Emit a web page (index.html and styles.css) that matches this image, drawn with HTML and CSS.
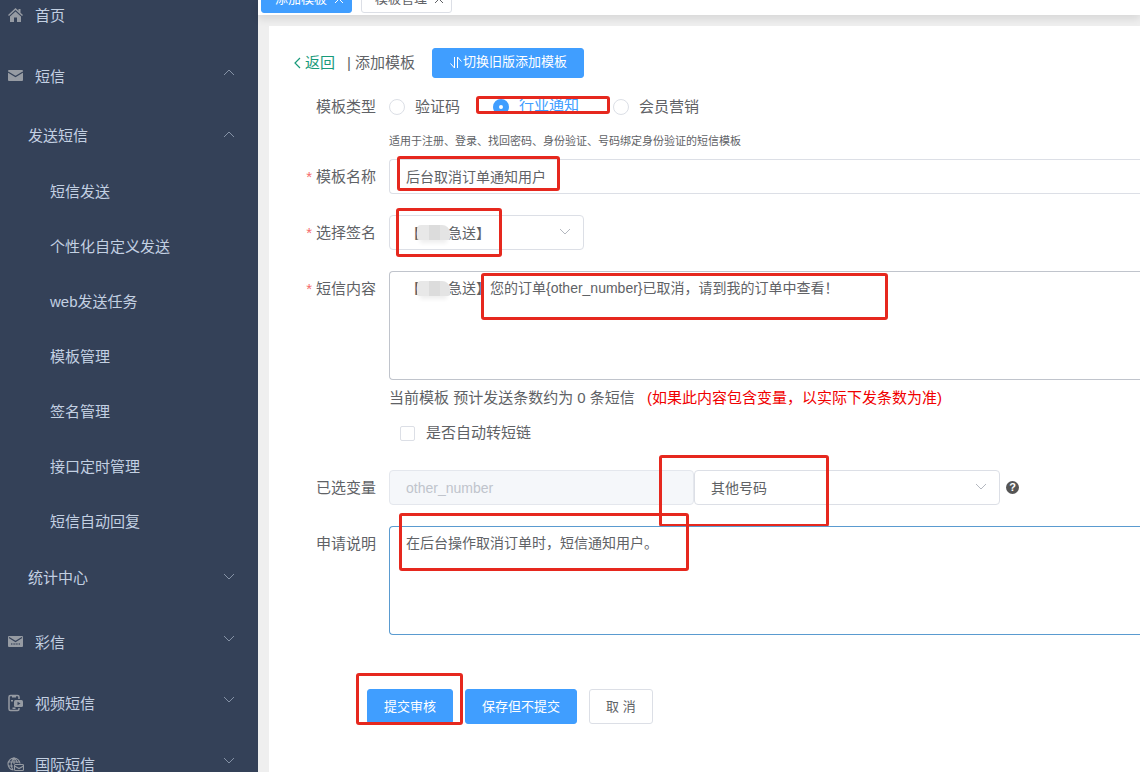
FILE: index.html
```html
<!DOCTYPE html>
<html lang="zh-CN">
<head>
<meta charset="utf-8">
<title>添加模板</title>
<link rel="stylesheet" href="styles.css">
</head>
<body>
<svg class="defs" aria-hidden="true">
  <symbol id="down" viewBox="0 0 12 8"><path d="M1 1l5 5 5-5" fill="none" stroke="currentColor"/></symbol>
  <symbol id="up" viewBox="0 0 12 8"><path d="M1 6l5-5 5 5" fill="none" stroke="currentColor"/></symbol>
  <symbol id="close" viewBox="0 0 8 8"><path d="M0 0l8 8M8 0L0 8" fill="none" stroke="currentColor"/></symbol>
</svg>
<nav class="sidebar">
  <a class="group home" href="#"><svg class="icon" viewBox="0 0 17 16"><path d="M8.500 1L1 8l1 1 6.500-6L15 9l1-1-2.500-2.300V2h-2v1.800zM8.500 4.500L3 9.500V15h4v-4.500h3V15h4V9.500z" fill="currentColor"/></svg><span>首页</span></a>
  <button class="group"><svg class="icon" viewBox="0 0 17 16"><rect x="1" y="2" width="15" height="11" rx="1" fill="currentColor"/><path d="M1 4l7.500 4.500L16 4" fill="none" stroke="#344158" stroke-width="1.200"/></svg><span>短信</span><svg class="arrow raised"><use href="#up"/></svg></button>
  <button class="sub"><span>发送短信</span><svg class="arrow"><use href="#up"/></svg></button>
  <a class="item" href="#">短信发送</a>
  <a class="item" href="#">个性化自定义发送</a>
  <a class="item" href="#">web发送任务</a>
  <a class="item" href="#">模板管理</a>
  <a class="item" href="#">签名管理</a>
  <a class="item" href="#">接口定时管理</a>
  <a class="item" href="#">短信自动回复</a>
  <button class="sub last"><span>统计中心</span><svg class="arrow"><use href="#down"/></svg></button>
  <button class="group"><svg class="icon" viewBox="0 0 17 16"><rect x="1" y="2" width="15" height="11" rx="1" fill="currentColor"/><path d="M2 3.500l6.500 4 6.500-4" fill="none" stroke="#344158" stroke-width="1.200"/><path d="M4 10h9" stroke="#344158" stroke-width="2" stroke-dasharray="1 .6" opacity=".6"/></svg><span>彩信</span><svg class="arrow raised"><use href="#down"/></svg></button>
  <button class="group"><svg class="icon tall" viewBox="0 0 17 18"><path d="M12 5V3a1.500 1.500 0 0 0-1.500-1.500h-7A1.500 1.500 0 0 0 2 3v12a1.500 1.500 0 0 0 1.500 1.500h7A1.500 1.500 0 0 0 12 15v-1" fill="none" stroke="currentColor" stroke-width="1.500"/><path d="M5 2h4v1.500H5zM4 6h2v1.500H4zM5.500 13.500h3V15h-3z" fill="currentColor"/><rect x="7" y="6" width="9" height="7" rx="1.500" fill="currentColor"/><path d="M10.500 7.700l3 1.800-3 1.800z" fill="#344158"/></svg><span>视频短信</span><svg class="arrow raised"><use href="#down"/></svg></button>
  <button class="group"><svg class="icon" viewBox="0 0 17 16"><g fill="none" stroke="currentColor" stroke-width="1.100"><path d="M6.500 14A6 6 0 1 1 13 7.500M7 2C3.500 5.500 3.500 10.500 6 14M7 2c2 1.500 3 3 3.200 5M1.500 6H12M1.500 10H6M7 2v6"/><rect x="7.500" y="8.500" width="9" height="6" rx="1"/><path d="M7.500 10l4.500 2.500 4.500-2.500"/></g></svg><span>国际短信</span><svg class="arrow raised"><use href="#down"/></svg></button>
</nav>
<main class="main">
  <header class="tabs">
    <a class="tab active" href="#">添加模板<svg class="close"><use href="#close"/></svg></a>
    <a class="tab" href="#">模板管理<svg class="close"><use href="#close"/></svg></a>
  </header>
  <section class="panel">
    <div class="heading">
      <a class="back" href="#"><svg class="backicon" viewBox="0 0 8 12"><path d="M7 1L2 6l5 5" fill="none" stroke="currentColor" stroke-width="1.200"/></svg>返回</a>
      <span class="title">| 添加模板</span>
      <button class="btn primary switch"><svg class="sort" viewBox="0 0 13 13"><path d="M5 1v11L1 7.500M8 12V1l4 4.500" fill="none" stroke="currentColor"/></svg>切换旧版添加模板</button>
    </div>
    <form class="form">
      <div class="row type" role="radiogroup" aria-labelledby="type">
        <span class="label" id="type">模板类型</span>
        <div class="field">
          <label class="option"><input class="radio" type="radio" name="type">验证码</label>
          <label class="option chosen"><input class="radio" type="radio" name="type" checked>行业通知</label>
          <label class="option"><input class="radio" type="radio" name="type">会员营销</label>
        </div>
      </div>
      <p class="hint">适用于注册、登录、找回密码、身份验证、号码绑定身份验证的短信模板</p>
      <div class="row">
        <label class="label required" for="name">模板名称</label>
        <div class="field"><input class="control open" id="name" value="后台取消订单通知用户"><i class="mark mark-name"></i></div>
      </div>
      <div class="row">
        <label class="label required" for="sign">选择签名</label>
        <div class="field">
          <div class="picker narrow"><select class="control" id="sign"><option>【　　急送】</option></select><svg class="caret"><use href="#down"/></svg></div>
          <i class="smudge"></i><i class="mark mark-sign"></i>
        </div>
      </div>
      <div class="row">
        <label class="label required" for="content">短信内容</label>
        <div class="field"><textarea class="control area open dark" id="content">【　　急送】您的订单{other_number}已取消，请到我的订单中查看！</textarea><i class="smudge"></i><i class="mark mark-content"></i></div>
      </div>
      <p class="count">当前模板 预计发送条数约为 0 条短信 <span class="warn">(如果此内容包含变量，以实际下发条数为准)</span></p>
      <label class="short"><input class="check" type="checkbox">是否自动转短链</label>
      <div class="row">
        <label class="label" for="variable">已选变量</label>
        <div class="field">
          <input class="control variable" id="variable" value="other_number" disabled>
          <div class="picker wide"><select class="control" aria-label="变量类型"><option>其他号码</option></select><svg class="caret"><use href="#down"/></svg></div>
          <span class="help">?</span><i class="mark mark-variable"></i>
        </div>
      </div>
      <div class="row">
        <label class="label" for="reason">申请说明</label>
        <div class="field"><textarea class="control area open focus" id="reason">在后台操作取消订单时，短信通知用户。</textarea><i class="mark mark-reason"></i></div>
      </div>
      <div class="actions">
        <button class="btn primary" type="button">提交审核</button>
        <button class="btn primary" type="button">保存但不提交</button>
        <button class="btn" type="button">取 消</button>
        <i class="mark mark-submit"></i>
      </div>
    </form>
  </section>
</main>
</body>
</html>
```

FILE: styles.css
```css
* { box-sizing: border-box; }
body {
  margin: 0;
  height: 100vh;
  display: flex;
  overflow: hidden;
  background: #efefef;
  color: #606266;
  font: 15px/20px "Liberation Sans", "Noto Sans CJK SC", sans-serif;
}
button, input, select, textarea { font-family: inherit; color: inherit; margin: 0; }
a { color: inherit; text-decoration: none; }
p { margin: 0; }
.defs { display: none; }

.sidebar {
  flex: 0 0 258px;
  display: flex;
  flex-direction: column;
  overflow: hidden;
  background: #344158;
  color: #c3d0e2;
}
.group, .sub, .item {
  flex: none;
  display: flex;
  align-items: center;
  border: 0;
  background: none;
  font-size: 15px;
  line-height: 20px;
  text-align: left;
}
.group { height: 61px; padding: 0 23px 0 7px; }
.home { margin-top: -15px; }
.sub { height: 57px; padding: 0 23px 0 28px; }
.last { margin-bottom: 6px; }
.item { height: 55px; padding-left: 50px; }
.icon { width: 17px; height: 16px; margin: 0 11px 2px 0; color: #969ba3; }
.tall { height: 18px; }
.arrow { width: 12px; height: 8px; margin: 0 0 2px auto; color: #8592a6; }
.raised { margin-bottom: 8px; }

.main { flex: 1; min-width: 0; display: flex; flex-direction: column; }
.tabs {
  flex: none;
  display: flex;
  align-items: flex-end;
  gap: 9px;
  height: 15px;
  padding: 0 0 2px 3px;
  background: #fff;
  box-shadow: 0 4px 8px rgba(0, 0, 0, .1);
}
.tab {
  flex: none;
  display: flex;
  align-items: center;
  gap: 8px;
  height: 28px;
  padding: 0 8px 0 13px;
  border: 1px solid #dcdfe6;
  border-radius: 3px;
  font-size: 13px;
}
.active { background: #409eff; border-color: #409eff; color: #fff; }
.close { width: 8px; height: 8px; }

.panel { flex: 1; margin: 11px 0 0 11px; padding-top: 22px; background: #fff; overflow: hidden; }
.heading { display: flex; align-items: center; height: 30px; padding-left: 24px; }
.back { display: flex; align-items: center; gap: 4px; color: #189a7a; }
.backicon { width: 8px; height: 12px; }
.title { margin: 0 17px 0 12px; }
.btn {
  display: flex;
  align-items: center;
  height: 35px;
  padding: 0 16px;
  border: 1px solid #dcdfe6;
  border-radius: 3px;
  background: #fff;
  font-size: 13px;
  line-height: 20px;
}
.primary { background: #409eff; border-color: #409eff; color: #fff; }
.switch { height: 30px; padding-bottom: 2px; }
.sort { width: 14px; height: 13px; }

.form { padding-top: 19px; }
.row { display: flex; margin-bottom: 21px; }
.label { flex: 0 0 107px; margin-right: 13px; line-height: 36px; text-align: right; }
.required::before { content: "*"; margin-right: 4px; color: #f56c6c; }
.field { position: relative; flex: 1; min-width: 0; display: flex; align-items: center; }
.row { height: auto; }
.type { height: 20px; margin-bottom: 14px; }
.type .label { line-height: 20px; }
.row .label { margin-bottom: -1px; }
.option { display: flex; align-items: center; gap: 10px; white-space: nowrap; }
.radio {
  appearance: none;
  width: 16px;
  height: 16px;
  border: 1px solid #dcdfe6;
  border-radius: 50%;
  background: #fff;
}
.radio:checked { border: 6px solid #409eff; }
.chosen {
  width: 134px;
  height: 18px;
  margin: 0 3px 4px 16px;
  padding-left: 14px;
  border: 3px solid #e6281e;
  border-radius: 3px;
  overflow: hidden;
  color: #409eff;
}
.chosen .radio { margin-top: 4px; }
.hint { margin: 0 0 8px 120px; font-size: 11px; white-space: nowrap; }

.control {
  display: block;
  width: 100%;
  height: 35px;
  padding: 0 16px;
  border: 1px solid #dcdfe6;
  border-radius: 4px;
  background: #fff;
  font-size: 14px;
  outline: 0;
}
select.control { appearance: none; }
input.open { padding-bottom: 2px; }
.area { height: 109px; padding-top: 4px; line-height: 24px; resize: none; overflow: hidden; }
.open { border-right: 0; border-radius: 4px 0 0 4px; }
.dark { border-color: #c0c4cc; }
.focus { border-color: #5a9bd0; }
.picker { position: relative; }
.narrow { width: 195px; }
.wide { width: 306px; }
.caret { position: absolute; right: 13px; top: 13px; width: 12px; height: 8px; color: #b4b8c0; pointer-events: none; }
.variable { width: 305px; background: #f5f7fa; border-color: #e4e7ed; color: #c0c4cc; }
.help {
  width: 13px;
  height: 13px;
  margin-left: 6px;
  border-radius: 50%;
  background: #555;
  color: #fff;
  font-size: 11px;
  font-weight: bold;
  line-height: 13px;
  text-align: center;
}
.count { margin: -14px 0 14px 120px; line-height: 22px; white-space: nowrap; }
.warn { margin-left: 8px; color: #f00000; }
.short { display: flex; align-items: center; gap: 11px; margin: 0 0 27px 131px; }
.check { appearance: none; width: 15px; height: 15px; border: 1px solid #dcdfe6; border-radius: 2px; }
.actions { position: relative; display: flex; gap: 12px; margin: 54px 0 0 98px; }

/* Redaction over the signature name */
.smudge {
  position: absolute;
  left: 28px;
  top: 10px;
  width: 33px;
  height: 15px;
  border-radius: 4px 8px 2px 2px;
  background: linear-gradient(90deg, #e8e8e8 35%, #dcdcdc 35% 70%, #e4e4e4 70%);
  box-shadow: 0 6px 4px -3px #eee;
}
/* Red annotation frames */
.mark { position: absolute; border: 3px solid #e6281e; border-radius: 3px; pointer-events: none; }
.mark-name { left: 8px; top: -3px; width: 163px; height: 35px; }
.mark-sign { left: 7px; top: -7px; width: 106px; height: 49px; }
.mark-content { left: 92px; top: 2px; width: 407px; height: 47px; }
.mark-variable { left: 270px; top: -15px; width: 170px; height: 72px; }
.mark-reason { left: 10px; top: -13px; width: 290px; height: 58px; }
.mark-submit { left: -11px; top: -16px; width: 107px; height: 52px; }
```
